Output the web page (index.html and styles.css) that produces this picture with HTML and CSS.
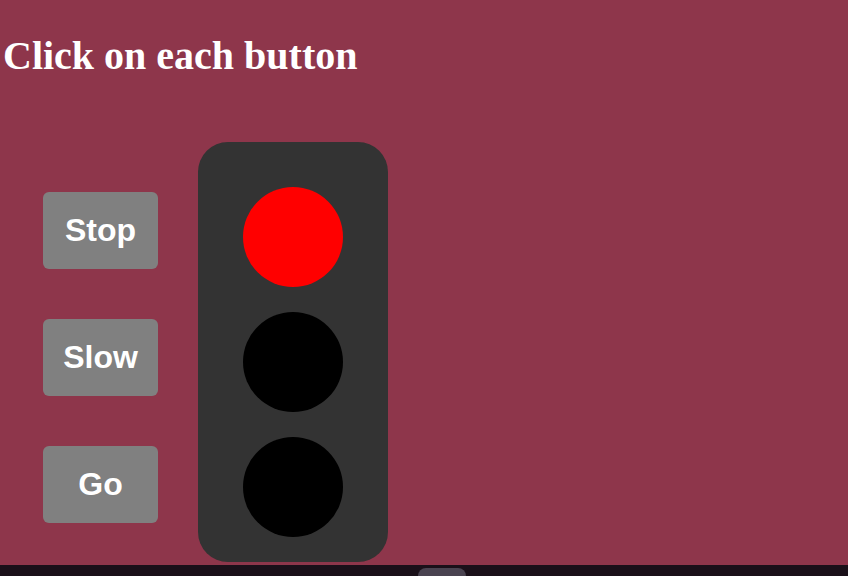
FILE: index.html
```html
<!DOCTYPE html>
<html>
<head>
<meta charset="utf-8">
<link rel="stylesheet" href="styles.css">
</head>
<body>
<h1 class="title">Click on each button</h1>
<div class="stage">
  <div class="buttons">
    <button class="btn">Stop</button>
    <button class="btn">Slow</button>
    <button class="btn">Go</button>
  </div>
  <div class="light">
    <div class="lamp red"></div>
    <div class="lamp"></div>
    <div class="lamp"></div>
  </div>
</div>
<div class="bottombar"><div class="tab"></div></div>
</body>
</html>
```
FILE: styles.css
```css
html, body {
  margin: 0;
  padding: 0;
  height: 100%;
  overflow: hidden;
}
body {
  background: #8e364b;
  position: relative;
}
.title {
  font-family: "Liberation Serif", serif;
  font-weight: bold;
  font-size: 40px;
  color: #fff;
  margin: 0;
  padding: 33px 0 0 3px;
  line-height: 46px;
}
.stage {
  display: flex;
  align-items: flex-start;
  margin-top: 63px;
  padding-left: 43px;
  gap: 40px;
}
.buttons {
  display: flex;
  flex-direction: column;
  gap: 50px;
  padding-top: 50px;
}
.btn {
  width: 115px;
  height: 77px;
  background: #808080;
  border: none;
  border-radius: 6px;
  color: #fff;
  font-family: "Liberation Sans", Arial, sans-serif;
  font-weight: bold;
  font-size: 32px;
  padding: 0;
}
.light {
  width: 190px;
  height: 420px;
  box-sizing: border-box;
  background: #333;
  border-radius: 30px;
  padding-top: 45px;
  display: flex;
  flex-direction: column;
  align-items: center;
  gap: 25px;
}
.lamp {
  width: 100px;
  height: 100px;
  border-radius: 50%;
  background: #000;
}
.lamp.red {
  background: #f00;
}
.bottombar {
  position: absolute;
  left: 0;
  right: 0;
  bottom: 0;
  height: 11px;
  background: #1a1019;
}
.tab {
  position: absolute;
  left: 418px;
  top: 3px;
  width: 48px;
  height: 16px;
  border-radius: 10px;
  background: #4a4350;
}
```
